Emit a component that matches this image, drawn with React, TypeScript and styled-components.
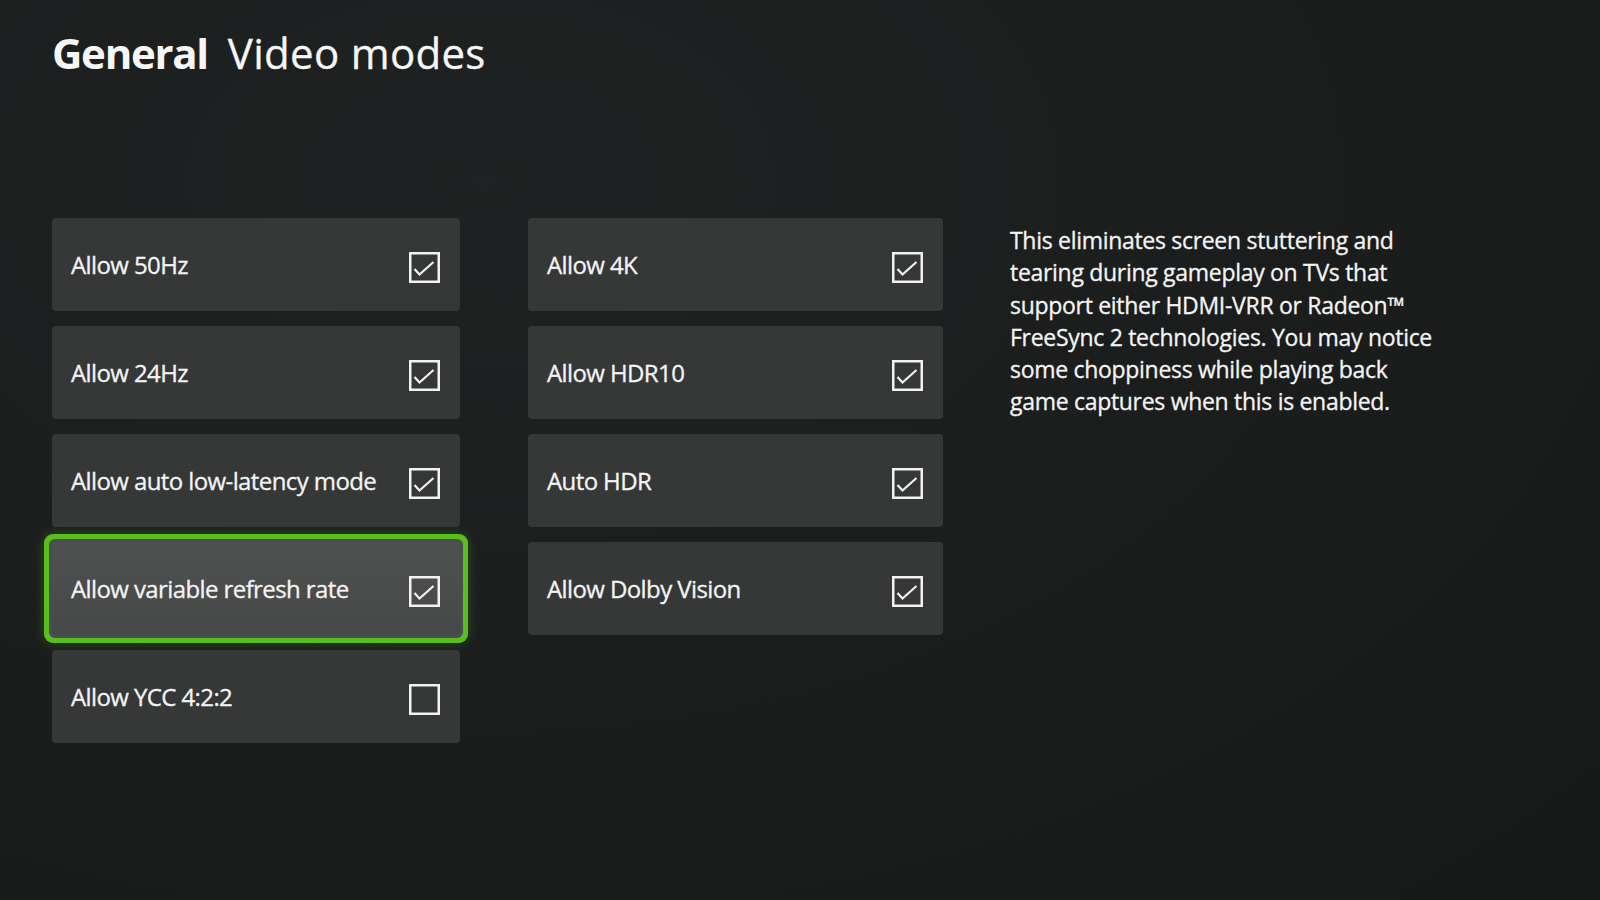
import React from 'react'
import styled, { createGlobalStyle, css } from 'styled-components'

const GlobalStyle = createGlobalStyle`
  html, body {
    margin: 0;
    padding: 0;
    background: #1b1e1e;
  }
  body {
    font-family: 'Open Sans', 'Noto Sans', sans-serif;
    color: #f4f4f4;
  }
`

type Option = {
  label: string
  checked: boolean
  focused?: boolean
}

const leftOptions: Option[] = [
  { label: 'Allow 50Hz', checked: true },
  { label: 'Allow 24Hz', checked: true },
  { label: 'Allow auto low-latency mode', checked: true },
  { label: 'Allow variable refresh rate', checked: true, focused: true },
  { label: 'Allow YCC 4:2:2', checked: false },
]

const rightOptions: Option[] = [
  { label: 'Allow 4K', checked: true },
  { label: 'Allow HDR10', checked: true },
  { label: 'Auto HDR', checked: true },
  { label: 'Allow Dolby Vision', checked: true },
]

const descriptionLines = [
  'This eliminates screen stuttering and',
  'tearing during gameplay on TVs that',
  'support either HDMI-VRR or Radeon™',
  'FreeSync 2 technologies. You may notice',
  'some choppiness while playing back',
  'game captures when this is enabled.',
]

const CheckBox = ({ checked }: { checked: boolean }) => (
  <St.Check width="31" height="31" viewBox="0 0 31 31">
    <rect x="1.25" y="1.25" width="28.5" height="28.5" fill="none" stroke="#f2f2f2" strokeWidth="2.5" />
    {checked && (
      <polyline points="5.5,17 10.5,22.5 24.5,10" fill="none" stroke="#f2f2f2" strokeWidth="2.2" />
    )}
  </St.Check>
)

const OptionCard = ({ label, checked, focused }: Option) => (
  <St.Card $focused={focused}>
    <St.Label>{label}</St.Label>
    <CheckBox checked={checked} />
  </St.Card>
)

const App = () => {
  return (
    <St.Page>
      <GlobalStyle />
      <St.Title>
        <St.Section>General</St.Section>
        <St.Sub>Video modes</St.Sub>
      </St.Title>
      <St.Body>
        <St.Column $width={408} $gapAfter={68}>
          {leftOptions.map((o) => (
            <OptionCard key={o.label} {...o} />
          ))}
        </St.Column>
        <St.Column $width={415} $gapAfter={67}>
          {rightOptions.map((o) => (
            <OptionCard key={o.label} {...o} />
          ))}
        </St.Column>
        <St.Description>
          {descriptionLines.map((line) => (
            <St.Line key={line}>{line}</St.Line>
          ))}
        </St.Description>
      </St.Body>
    </St.Page>
  )
}

export default App

const St = {
  Page: styled.div`
    width: 1600px;
    height: 900px;
    box-sizing: border-box;
    padding: 31px 0 0 52px;
    background: radial-gradient(ellipse at 30% 20%, #1f2222 0%, #1b1d1d 55%, #171919 100%);
    overflow: hidden;
  `,
  Title: styled.h1`
    margin: 0;
    display: flex;
    align-items: baseline;
    gap: 20px;
    font-size: 42px;
    line-height: 43px;
    color: #f6f6f6;
  `,
  Section: styled.span`
    font-weight: 700;
    letter-spacing: -1.3px;
  `,
  Sub: styled.span`
    font-weight: 400;
    letter-spacing: 0.3px;
    -webkit-text-stroke: 0.3px currentColor;
  `,
  Body: styled.div`
    display: flex;
    align-items: flex-start;
    margin-top: 144px;
  `,
  Column: styled.div<{ $width: number; $gapAfter: number }>`
    display: flex;
    flex-direction: column;
    gap: 15px;
    width: ${(p) => p.$width}px;
    margin-right: ${(p) => p.$gapAfter}px;
  `,
  Card: styled.div<{ $focused?: boolean }>`
    height: 93px;
    box-sizing: border-box;
    padding: 0 20px 0 19px;
    display: flex;
    align-items: center;
    justify-content: space-between;
    border-radius: 4px;
    background: #363838;

    ${(p) =>
      p.$focused &&
      css`
        background: linear-gradient(180deg, #4f5050 0%, #474848 100%);
        box-shadow: 0 0 0 3px #4c4d4d, 0 0 0 8px #58bf20, 0 0 12px 8px rgba(88, 191, 32, 0.3);
        border-radius: 3px;
      `}
  `,
  Label: styled.span`
    font-size: 24px;
    letter-spacing: -0.6px;
    -webkit-text-stroke: 0.3px currentColor;
    color: #f4f4f4;
    white-space: nowrap;
  `,
  Check: styled.svg`
    flex: none;
    display: block;
    margin-top: 5px;
  `,
  Description: styled.div`
    margin-top: 6px;
    font-size: 23px;
    line-height: 32.3px;
    letter-spacing: -0.3px;
    -webkit-text-stroke: 0.3px currentColor;
    color: #f4f4f4;
  `,
  Line: styled.div`
    white-space: nowrap;
  `,
}
